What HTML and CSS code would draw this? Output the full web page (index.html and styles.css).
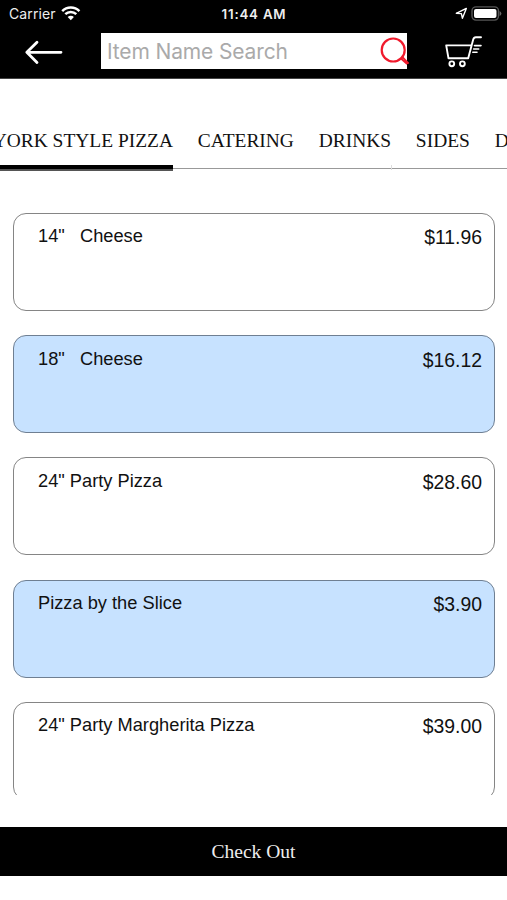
FILE: index.html
```html
<!DOCTYPE html>
<html lang="en">
<head>
<meta charset="utf-8">
<title>Menu</title>
<link rel="stylesheet" href="styles.css">
</head>
<body>
<div class="app">
  <div class="status">
    <div class="carrier"><span class="carrier-name">Carrier</span>
      <svg class="wifi" width="20" height="15" viewBox="0 0 20 15" fill="none" stroke="#fff" stroke-width="2.5"><path d="M1.2 5.1a12.2 12.2 0 0 1 17.2 0M4.3 8.2a7.8 7.8 0 0 1 11 0"/><path d="M9.8 14.2L6.7 11.1a4.4 4.4 0 0 1 6.2 0z" fill="#fff" stroke="none"/></svg>
    </div>
    <div class="time">11:44 AM</div>
    <div class="indicators">
      <svg width="13" height="13" viewBox="0 0 13 13" fill="none" stroke="#fff" stroke-width="1.4" stroke-linejoin="round"><path d="M1.3 6.3L11.3 1.4L7.4 11.3L6.4 6.6z"/></svg>
      <svg width="31" height="15" viewBox="0 0 31 15"><rect x="1" y=".9" width="26.5" height="13.2" rx="4" fill="#000" stroke="#555" stroke-width="1.4"/><rect x="3" y="3" width="22.5" height="9" rx="2" fill="#fff"/><path d="M28.6 5q1.8 1 1.8 2.5T28.6 10z" fill="#666"/></svg>
    </div>
  </div>
  <header class="toolbar">
    <svg class="back" width="40" height="26" viewBox="0 0 40 26" fill="none" stroke="#fff" stroke-width="2.8" stroke-linecap="round" stroke-linejoin="round"><path d="M37 13.3H3M13 3.2L2.8 13.3L13 23.6"/></svg>
    <div class="search"><span>Item Name Search</span>
      <svg class="lens" width="31" height="31" viewBox="0 0 31 31" fill="none" stroke="#f01a2c" stroke-width="2.2"><circle cx="14.2" cy="14" r="11.5"/><path d="M22 22.6l1.8-1.2 5.8 6.2M22 22.6l6.2 5.6" stroke-width="1.8"/></svg>
    </div>
    <svg class="cart" width="40" height="34" viewBox="0 0 40 34" fill="none" stroke="#fff" stroke-width="1.9" stroke-linecap="round" stroke-linejoin="round"><path d="M37 2.2h-5.2q-2 0-2.6 2.4L24.2 23.3H4.5L2.2 10.4H26.8"/><path d="M30.5 10.6h6.5M29.7 14h5M28.8 17.2h4.2" stroke-width="1.6"/><circle cx="7.8" cy="28.8" r="2.4"/><circle cx="18.4" cy="28.8" r="2.4"/></svg>
  </header>
  <nav class="tabs">
    <div class="tab active"><span>YORK STYLE PIZZA</span></div>
    <div class="tab">CATERING</div>
    <div class="tab">DRINKS</div>
    <div class="tab">SIDES</div>
    <div class="tab">D</div>
  </nav>
  <main class="list">
    <div class="card"><span class="name">14"&nbsp;&nbsp; Cheese</span><span class="price">$11.96</span></div>
    <div class="card tinted"><span class="name">18"&nbsp;&nbsp; Cheese</span><span class="price">$16.12</span></div>
    <div class="card"><span class="name">24" Party Pizza</span><span class="price">$28.60</span></div>
    <div class="card tinted"><span class="name">Pizza by the Slice</span><span class="price">$3.90</span></div>
    <div class="card"><span class="name">24" Party Margherita Pizza</span><span class="price">$39.00</span></div>
  </main>
  <footer class="checkout">Check Out</footer>
</div>
</body>
</html>
```
FILE: styles.css
```css
* { box-sizing: border-box; }
body { margin: 0; background: #fff; color: #111; font-family: "Liberation Sans", Arial, sans-serif; }
.app { width: 507px; height: 900px; overflow: hidden; display: flex; flex-direction: column; }
.app > * { flex-shrink: 0; }
svg { display: block; flex-shrink: 0; }

.status { height: 28px; background: #000; color: #eee; display: grid; grid-template-columns: 1fr auto 1fr; align-items: center; padding: 0 5px 0 9px; font-family: Inter, sans-serif; font-size: 14px; }
.carrier { display: flex; align-items: center; gap: 5px; padding-bottom: 1px; }
.carrier-name { letter-spacing: .1px; }
.wifi { margin-top: -1px; }
.time { font-weight: 600; font-size: 13.3px; letter-spacing: .8px; margin-left: -3px; }
.indicators { display: flex; justify-content: flex-end; align-items: center; gap: 3px; margin-top: -2px; }

.toolbar { height: 51px; background: #000; display: flex; align-items: flex-start; padding: 5px 0 0 24px; border-bottom: 1px solid #444; }
.back { margin-top: 6px; }
.search { width: 306px; height: 36px; margin-left: 37px; padding-left: 6px; background: #fff; display: flex; align-items: center; justify-content: space-between; color: #aaa; font-family: Inter, sans-serif; font-size: 21px; letter-spacing: -.14px; white-space: nowrap; }
.lens { margin-right: -3px; }
.cart { margin: 2px 0 0 37px; }

.tabs { height: 93px; display: flex; gap: 24.8px; padding-top: 43px; overflow: hidden; font-family: "Liberation Serif", "Times New Roman", serif; font-size: 19.45px; line-height: 38px; white-space: nowrap; background: linear-gradient(#ddd, #ddd) 391px 86px / 1px 5px no-repeat, linear-gradient(#999, #999) 0 89px / 100% 1px no-repeat; }
.tab { flex-shrink: 0; height: 49px; }
.tab.active { width: 173px; display: flex; justify-content: flex-end; background: linear-gradient(#000 0 67%, #555 67%) bottom / 100% 6px no-repeat; }

.list { height: 623px; padding: 41px 12px 0 13px; display: flex; flex-direction: column; gap: 24.1px; overflow: hidden; }
.card { flex-shrink: 0; height: 98.1px; border: 1px solid #858585; border-radius: 13px; padding: 11.4px 12px 0 24px; display: flex; justify-content: space-between; }
.tinted { background: #c7e2ff; border-color: #6f7f92; }
.name { font-size: 18.25px; line-height: 22px; }
.price { font-size: 19.4px; line-height: 24px; }

.checkout { height: 49px; margin-top: 32px; background: #000; color: #eee; text-align: center; font-family: "Liberation Serif", "Times New Roman", serif; font-size: 19.5px; line-height: 49px; }
```
